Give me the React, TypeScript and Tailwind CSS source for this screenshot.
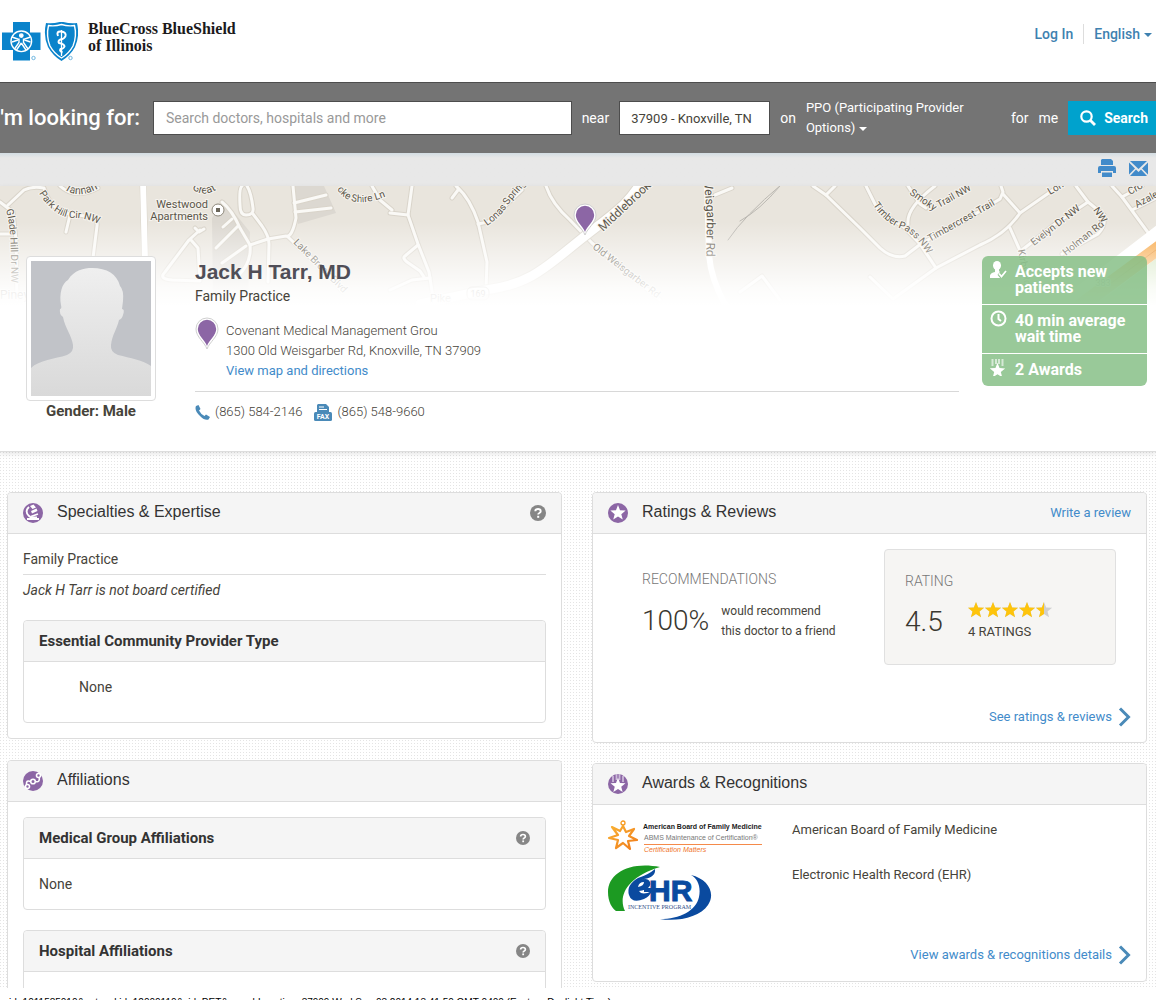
import React from 'react';

const roads: string[] = [
  'M0 202L13 212L16 240L17 300', 'M8 205L24 190Q32 186 44 188Q50 210 70 214L92 217Q98 220 97 226L93 258',
  'M70 215L66 232', 'M0 234H10', 'M60 186Q75 200 98 188',
  'M242 186Q239 188 240 205Q240 215 246 215Q254 215 253 208Q251 192 247 186',
  'M222 202Q232 210 240 228L250 245Q252 262 238 276', 'M250 245L268 239L286 236Q292 238 296 218L293 186',
  'M294 203L326 195', 'M295 212L331 208', 'M253 214L262 226Q269 236 269 244L268 282',
  'M288 237L306 254Q330 272 342 292', 'M195 228L199 232L204 229', 'M200 230L189 240L165 272Q158 279 172 280L200 281L198 248L191 240',
  'M223 227L232 219', 'M216 248L238 226', 'M222 263L246 246', 'M372 186L380 200L392 210',
  'M390 213L408 215', 'M412 186L408 215L418 244L429 272L434 304', 'M418 245L405 256Q402 258 407 262L420 271L424 277',
  'M430 278L412 280L390 290', 'M456 186Q470 198 478 222L487 262L486 290', 'M452 198L458 190', 'M478 224L488 222L522 190',
  'M546 186Q552 204 570 220L592 243L660 300', 'M715 195L732 188', 'M740 292L762 276L780 300',
  'M813 186L826 195L860 228L880 248Q892 259 905 256L922 243L962 222L1000 199L1003 192L1001 186',
  'M826 195L835 186', 'M866 186L878 210L905 228L920 244L936 268', 'M870 277L893 299L936 268L980 245Q1006 234 1020 213L1056 188',
  'M1003 194L1020 213', 'M908 186L920 204L926 208', 'M935 186Q906 208 908 224', 'M1010 228L1022 255L1030 290',
  'M1022 250L1055 224L1088 202L1076 186', 'M1088 202L1104 215Q1106 226 1098 234L1062 254', 'M1112 186L1122 197L1152 238',
  'M1122 197L1142 186', 'M1132 210L1156 198',
];

const labels: { id: string; d: string; text: string; size: number }[] = [
  { id: 'tannah', d: 'M64 189Q80 201 104 185', text: 'Tannah', size: 11 },
  { id: 'park', d: 'M39 193Q54 218 74 218Q90 218 106 228', text: 'Park Hill Cir NW', size: 10 },
  { id: 'glade', d: 'M6 210Q12 226 11 290', text: 'Glade Hill Dr NW', size: 10 },
  { id: 'great', d: 'M192 188Q203 200 222 186', text: 'Great', size: 11 },
  { id: 'joke', d: 'M337 189Q352 214 396 192', text: 'oke Shire Ln', size: 10 },
  { id: 'lake', d: 'M293 243L356 306', text: 'Lake Brook Blvd', size: 10 },
  { id: 'lonas', d: 'M487 226Q502 216 510 202L534 174', text: 'Lonas Springs', size: 10 },
  { id: 'middle', d: 'M603 232L656 182', text: 'Middlebrook', size: 12 },
  { id: 'old', d: 'M592 248L664 304', text: 'Old Weisgarber Rd', size: 10 },
  { id: 'weis', d: 'M704 179L707 220L706 270', text: 'Weisgarber Rd', size: 12 },
  { id: 'timber', d: 'M873 205Q885 223 902 229Q918 236 932 262', text: 'Timber Pass NW', size: 10 },
  { id: 'smoky', d: 'M909 194L938 214', text: 'Smoky', size: 10 },
  { id: 'trail', d: 'M939 208L982 184', text: 'Trail NW', size: 10 },
  { id: 'crest', d: 'M930 242L1004 200', text: 'Timbercrest Trail', size: 10 },
  { id: 'evelyn', d: 'M1034 246L1088 204', text: 'Evelyn Dr NW', size: 10 },
  { id: 'holman', d: 'M1066 256L1110 221', text: 'Holman Rd', size: 10 },
  { id: 'nw', d: 'M1093 210L1106 229', text: 'NW', size: 10 },
  { id: 'kirby', d: 'M1018 250L1027 300', text: 'Kirby Rd', size: 10 },
  { id: 'lon', d: 'M1050 195L1072 182', text: 'Lon', size: 10 },
  { id: 'cross', d: 'M1130 195L1154 182', text: 'Cro', size: 10 },
  { id: 'azalea', d: 'M1137 208L1170 190', text: 'Azalea', size: 10 },
];

function Pin({ className }: { className?: string }) {
  return (
    <svg className={className} width="24" height="34" viewBox="0 0 24 34" aria-hidden="true">
      <path d="M12 32C9.500 25 1 20 1 12A11 11 0 0 1 23 12C23 20 14.500 25 12 32Z" fill="#fff" stroke="#cfcfcf" strokeWidth="1" />
      <path d="M12 29C10 23 2.800 18.500 2.800 12A9.200 9.200 0 0 1 21.200 12C21.200 18.500 14 23 12 29Z" fill="#8c66a5" />
    </svg>
  );
}

function MapBackdrop() {
  return (
    <svg
      className="absolute inset-x-0 top-0 h-[120px] w-full"
      viewBox="0 186 1156 120"
      preserveAspectRatio="xMidYMin slice"
      fontFamily="Roboto, 'Noto Sans', sans-serif"
    >
      <defs>
        <linearGradient id="fade" x1="0" y1="0" x2="0" y2="1">
          <stop offset="0.3" stopColor="#fff" stopOpacity="0" />
          <stop offset="0.6" stopColor="#fff" stopOpacity="0.5" />
          <stop offset="0.85" stopColor="#fff" stopOpacity="0.88" />
          <stop offset="1" stopColor="#fff" />
        </linearGradient>
        {labels.map((l) => <path key={l.id} id={l.id} d={l.d} />)}
      </defs>
      <rect y="186" width="1156" height="120" fill="#e9e5dd" />
      <path d="M212 218L224 200L250 232L248 300H213Z M295 186H324L336 213L298 224Z" fill="#dcd8d1" />
      <path d="M1110 270L1156 258V306H1100Z" fill="#cfe3b8" />
      <g fill="none" strokeLinejoin="round" strokeLinecap="round">
        {roads.map((d) => <path key={d} d={d} stroke="#d9d4ca" strokeWidth="5" />)}
        <path d="M143 180L145 262" stroke="#d9d4ca" strokeWidth="7" />
        {roads.map((d) => <path key={d} d={d} stroke="#faf9f6" strokeWidth="3" />)}
        <path d="M143 180L145 262M707 180L709 255Q711 280 726 306" stroke="#fff" strokeWidth="6" />
        <path d="M420 304L486 290C530 284 545 268 580 240S628 206 645 176" stroke="#ddd8ce" strokeWidth="11" />
        <path d="M420 304L486 290C530 284 545 268 580 240S628 206 645 176" stroke="#fff" strokeWidth="9" />
        <path d="M780 186Q760 210 740 221M782 184Q744 216 728 240" stroke="#bbb8b2" strokeWidth="1" />
        <path d="M1164 236L1086 296" stroke="#fff" strokeWidth="26" />
        <path d="M1164 244L1080 306" stroke="#f7a23b" strokeWidth="14" />
        <path d="M1164 244L1080 306" stroke="#e0831c" strokeWidth="1" />
      </g>
      <g fill="#5b564a" stroke="#f6f3ee" strokeWidth="2" paintOrder="stroke">
        {labels.map((l) => (
          <text key={l.id} fontSize={l.size}><textPath href={`#${l.id}`}>{l.text}</textPath></text>
        ))}
        <text x="208" y="208" fontSize="11" textAnchor="end">Westwood</text>
        <text x="208" y="220" fontSize="11" textAnchor="end">Apartments</text>
        <text x="0" y="299" fontSize="12">Piney</text>
        <text x="430" y="302" fontSize="11">Pike</text>
        <text x="478" y="297" fontSize="9" textAnchor="middle">169</text>
        <text x="1103" y="286" fontSize="9" textAnchor="middle">383</text>
      </g>
      <circle cx="218" cy="210" r="6" fill="#fff" stroke="#8d877a" />
      <rect x="216" y="208" width="4" height="4" fill="#6b665a" />
      <rect x="467" y="287" width="22" height="13" rx="5" fill="none" stroke="#b5afa4" />
      <rect y="186" width="1156" height="120" fill="url(#fade)" />
      <g transform="translate(573 203)">
        <path d="M12 32C9.500 25 1 20 1 12A11 11 0 0 1 23 12C23 20 14.500 25 12 32Z" fill="#fff" stroke="#cfcfcf" />
        <path d="M12 29C10 23 2.800 18.500 2.800 12A9.200 9.200 0 0 1 21.200 12C21.200 18.500 14 23 12 29Z" fill="#8c66a5" />
      </g>
    </svg>
  );
}

function Logo() {
  return (
    <svg width="76" height="40" viewBox="0 0 76 40" aria-hidden="true">
      <path d="M11 0H28V10.500H38.500V28H28V38.500H11V28H0V10.500H11Z" fill="#0a83cb" />
      <g fill="none" stroke="#fff" strokeWidth="1.400">
        <circle cx="19.300" cy="19.300" r="10.300" />
        <circle cx="19.300" cy="13.600" r="1.700" fill="#fff" />
        <path d="M10 15L17 17.500M28.500 15L21.500 17.500M17 16.500V20.500L12.500 27M21.500 16.500V20.500L26 27M19.300 21L14.500 28M19.300 21L24 28M10 20L16 18M28.500 20L22.500 18" />
      </g>
      <path d="M44 1Q51 2 59.500 -0.500Q68 2 75 1Q78 14 73 25Q68 34 59.500 39Q51 34 46 25Q41 14 44 1Z" fill="#0a83cb" />
      <path d="M46.500 3.500Q53 4.500 59.500 2.500Q66 4.500 72.500 3.500Q75 14 71 24Q67 31.500 59.500 36Q52 31.500 48 24Q44 14 46.500 3.500Z" fill="none" stroke="#fff" strokeWidth="1.400" />
      <path d="M59.500 8V34" stroke="#fff" strokeWidth="1.300" />
      <path d="M56 14Q54 9 59 9.500Q64.500 10 63.500 14Q62.500 17 58.500 17.500Q55.500 19 57 21Q62.500 22 62.500 24.500Q61.500 27 58.500 27Q57 29 60.500 30.500" fill="none" stroke="#fff" strokeWidth="2" />
      <circle cx="31.500" cy="36" r="1.700" fill="none" stroke="#6fb6e0" />
      <circle cx="68.500" cy="36" r="1.700" fill="none" stroke="#6fb6e0" />
    </svg>
  );
}

function Avatar() {
  return (
    <svg viewBox="0 0 120 135" className="block h-[135px] w-[120px]" role="img" aria-label="Doctor photo">
      <defs>
        <linearGradient id="body" x1="0" y1="0" x2="0" y2="1">
          <stop offset="0" stopColor="#efefef" />
          <stop offset="1" stopColor="#d9d9d9" />
        </linearGradient>
      </defs>
      <rect width="120" height="135" fill="#c1c3c8" />
      <path d="M0 107C8 99 24 98 36 94Q43 91 42 84C41 75 34 67 32 56Q28 53 29 48Q31 48 30 44C28 33 31 22 37 19C43 9 53 7 61 7C76 7 86 13 89 25Q93 29 92 40L91 48Q94 48 92 54Q91 58 88 59C86 68 81 74 80 84Q79 91 87 94C99 97 112 99 120 105V135H0Z" fill="url(#body)" />
    </svg>
  );
}

const STAR = 'M10 1L12.400 7.200L19 7.500L13.900 11.700L15.600 18L10 14.400L4.400 18L6.100 11.700L1 7.500L7.600 7.200Z';

function Round({ children }: { children: React.ReactNode }) {
  return (
    <svg width="20" height="20" viewBox="0 0 20 20" aria-hidden="true" className="shrink-0">
      <circle cx="10" cy="10" r="10" fill="#8c66a5" />
      {children}
    </svg>
  );
}
const SpecialtyIcon = () => (
  <Round>
    <path d="M4 16H16M8 13.500L15 11" stroke="#fff" strokeWidth="1.800" fill="none" />
    <path d="M7 3L10.500 1.500L13 4.500L9.500 6Z M8 8L13.500 5.500L14.500 8L9 10.500Z" fill="#fff" />
    <path d="M6 4Q1.500 8 5.500 12.500L8 14.500H14" stroke="#fff" strokeWidth="1.800" fill="none" />
  </Round>
);
const AffiliationIcon = () => (
  <Round>
    <g fill="none" stroke="#fff" strokeWidth="1.600">
      <circle cx="10" cy="10.500" r="2.300" />
      <circle cx="15.500" cy="4.500" r="2" />
      <circle cx="4.500" cy="15.500" r="2" />
      <path d="M7.700 10.500Q3 8.500 3.500 13.500M12.300 10.500Q17 12 16.300 6.500" />
    </g>
  </Round>
);
const RatingIcon = () => <Round><path d={STAR} fill="#fff" transform="translate(1.500 1.200) scale(.85)" /></Round>;
const AwardIcon = () => (
  <Round>
    <path d="M5 2V8M8.500 0V6M11.500 0V6M15 2V8" stroke="#cbb9d8" strokeWidth="1.800" />
    <path d={STAR} fill="#fff" transform="translate(1.700 3) scale(.83)" />
  </Round>
);

function Help({ size, label }: { size: number; label: string }) {
  return (
    <button type="button" aria-label={label} className="shrink-0">
      <svg width={size} height={size} viewBox="0 0 16 16" aria-hidden="true">
        <circle cx="8" cy="8" r="8" fill="#868686" />
        <path d="M5.300 6.300Q5.300 4 8 4T10.700 6.200Q10.700 7.300 9.400 8Q8.200 8.600 8.200 9.600" fill="none" stroke="#fff" strokeWidth="1.900" />
        <rect x="7.200" y="10.800" width="2" height="2" fill="#fff" />
      </svg>
    </button>
  );
}

function Chevron() {
  return (
    <svg width="13" height="20" viewBox="0 0 13 20" aria-hidden="true">
      <path d="M2 1.500L10.500 10L2 18.500" fill="none" stroke="#4a8ab8" strokeWidth="3" />
    </svg>
  );
}

function Panel({ icon, title, aside, children }: { icon: React.ReactNode; title: string; aside?: React.ReactNode; children: React.ReactNode }) {
  return (
    <section className="rounded border border-[#ddd] bg-white">
      <header className="flex h-[41px] items-center rounded-t border-b border-[#ddd] bg-[#f5f5f5] px-[15px]">
        {icon}
        <h2 className="ml-3.5 flex-1 pb-0.5 font-['Liberation_Sans',sans-serif] text-base leading-5 text-[#333]">{title}</h2>
        {aside}
      </header>
      {children}
    </section>
  );
}

function SubPanel({ title, help, children }: { title: string; help?: boolean; children: React.ReactNode }) {
  return (
    <section className="rounded border border-[#ddd] bg-white">
      <header className="flex h-[41px] items-center rounded-t border-b border-[#ddd] bg-[#f5f5f5] px-[15px]">
        <h3 className="flex-1 text-[15px] font-bold text-[#333]">{title}</h3>
        {help && <Help size={14} label={`About ${title}`} />}
      </header>
      {children}
    </section>
  );
}

function AbfmLogo() {
  return (
    <svg width="154" height="34" viewBox="0 0 154 34" className="shrink-0 overflow-visible" role="img" aria-label="American Board of Family Medicine logo" fontFamily="'Liberation Sans', sans-serif">
      <defs>
        <linearGradient id="sun" x1="0" y1="0" x2="1" y2="1">
          <stop offset="0" stopColor="#f9b233" />
          <stop offset="1" stopColor="#f07a1a" />
        </linearGradient>
      </defs>
      <circle cx="15" cy="3" r="2" fill="none" stroke="#f79a1e" strokeWidth="1.300" />
      <path d="M15 6L18 12L26 9L21 16L29 20L20 21L22 29L15 23L8 28L10 20L1 18L10 15L4 7L12 11Z" fill="none" stroke="url(#sun)" strokeWidth="2.200" strokeLinejoin="round" />
      <text x="35" y="9" fontSize="7" fontWeight="700" fill="#1b1b1b">American Board of Family Medicine</text>
      <text x="36" y="20" fontSize="7" fill="#777">ABMS Maintenance of Certification®</text>
      <path d="M36 24.500H154" stroke="#f58a4a" />
      <text x="36" y="32" fontSize="7" fontStyle="italic" fill="#f0752b">Certification Matters</text>
    </svg>
  );
}

function EhrLogo() {
  return (
    <svg width="104" height="55" viewBox="0 0 104 55" className="shrink-0" role="img" aria-label="EHR Incentive Program logo">
      <path d="M52 2C22 -4 0 8 0 27C0 37 4 43 8 46H17C10 32 18 12 52 2Z" fill="#1c9a22" />
      <path d="M83 10C100 14 108 28 100 40C92 52 70 57 52 54C72 54 88 46 91 32C93 22 90 14 83 10Z" fill="#0a4a9f" />
      <path d="M36 14Q48 12 47 4Q40 10 30 13Q18 20 21 30Q24 39 36 34Q42 31 44 26Q34 31 31 26Q44 24 42 17Q40 12 32 15ZM30 22Q31 17 36 17Q36 21 30 22Z" fill="#0a4a9f" fillRule="evenodd" />
      <path d="M36 23H48V27H36Z" fill="#0a4a9f" />
      <text x="41" y="36" fontSize="30" fontWeight="700" fill="#0a4a9f" stroke="#0a4a9f" fontFamily="'Liberation Sans', sans-serif">HR</text>
      <text x="20" y="44" fontSize="6" fill="#33518a" fontFamily="'Liberation Serif', serif">INCENTIVE PROGRAM</text>
    </svg>
  );
}

function Stars() {
  return (
    <svg width="85" height="17" viewBox="0 0 85 17" role="img" aria-label="4.5 out of 5 stars">
      <defs><clipPath id="half"><rect width="76" height="17" /></clipPath></defs>
      {[0, 17, 34, 51, 68].map((x) => <path key={x} d={STAR} fill="#cfcfcf" transform={`translate(${x - 1} 0) scale(.9)`} />)}
      <g clipPath="url(#half)">
        {[0, 17, 34, 51, 68].map((x) => <path key={x} d={STAR} fill="#fec40b" transform={`translate(${x - 1} 0) scale(.9)`} />)}
      </g>
    </svg>
  );
}

const Caret = () => <span className="ml-1 inline-block border-x-4 border-t-4 border-x-transparent border-t-current align-middle" />;

export default function App() {
  return (
    <div className="flex h-screen flex-col overflow-hidden bg-white font-[Roboto,'Noto_Sans',sans-serif] text-sm leading-5 text-[#46433a]">
      <header className="flex h-[82px] shrink-0 items-start justify-between pt-[22px] pr-1 pl-0.5">
        <a href="#home" className="flex items-start">
          <Logo />
          <span className="-mt-0.5 ml-2.5 font-['Liberation_Serif',serif] text-base leading-[17px] font-bold text-[#1c1a1b]">
            BlueCross BlueShield<br />of Illinois
          </span>
        </a>
        <nav className="flex items-center pt-0.5 font-medium text-[#3e81b0]">
          <a href="#login" className="pr-2.5">Log In</a>
          <button type="button" className="border-l border-[#ddd] pl-2.5 font-medium">English<Caret /></button>
        </nav>
      </header>

      <form className="flex h-[71px] shrink-0 items-center border-t border-[#4d4d4d] bg-[#747474] text-white">
        <label htmlFor="query" className="-ml-1.5 shrink-0 text-[22px] font-medium whitespace-nowrap">I'm looking for:</label>
        <input id="query" placeholder="Search doctors, hospitals and more" className="ml-[13px] h-[34px] min-w-0 flex-1 border border-[#4d4d4d] bg-white px-3 text-[#444] placeholder:text-[#999]" />
        <label htmlFor="near" className="mx-2.5">near</label>
        <input id="near" defaultValue="37909 - Knoxville, TN" className="h-[34px] w-[151px] border border-[#4d4d4d] bg-white px-[11px] text-[13px] text-[#46433a]" />
        <span className="mx-2.5">on</span>
        <button type="button" className="w-[195px] text-left text-[13px]">PPO (Participating Provider<br />Options)<Caret /></button>
        <span className="ml-2.5">for</span>
        <span className="mx-2.5">me</span>
        <button type="submit" className="flex h-[34px] items-center gap-2 bg-[#00a2cd] px-3 font-bold">
          <svg width="16" height="16" viewBox="0 0 16 16" fill="none" stroke="#fff" aria-hidden="true">
            <circle cx="6.500" cy="6.500" r="5.200" strokeWidth="2.200" /><path d="M10.500 10.500L15 15" strokeWidth="2.800" />
          </svg>
          <span className="-mr-1">Search</span>
        </button>
      </form>

      <div className="flex h-[33px] shrink-0 items-center justify-end gap-3 bg-linear-to-b from-[#d3dde3] via-[#e8e8e8] via-15% to-[#e8e8e8] pr-2 pb-[3px] text-[#428bca]">
        <button type="button" aria-label="Print">
          <svg width="20" height="18" viewBox="0 0 20 18" fill="currentColor" aria-hidden="true">
            <path d="M5 0H14L16 2V6H4V1Z M3 7H17Q19 7 19 9V14H16V12H4V14H1V9Q1 7 3 7Z M5 13.500H15V18H5Z" />
          </svg>
        </button>
        <button type="button" aria-label="Email">
          <svg width="19" height="15" viewBox="0 0 19 15" fill="currentColor" aria-hidden="true">
            <path d="M1 0H18L9.500 8Z M0 1.500L6 7.500L0 13.500Z M19 1.500L13 7.500L19 13.500Z M7 8.500L9.500 11L12 8.500L18 15H1Z" />
          </svg>
        </button>
      </div>

      <section className="relative z-10 h-[266px] shrink-0 border-b border-[#ddd] shadow-[0_2px_5px_rgba(0,0,0,0.1)]">
        <MapBackdrop />
        <div className="relative flex items-start pt-[70px] pr-[9px] pl-[26px]">
          <div className="w-[130px] shrink-0 text-center">
            <div className="rounded border border-[#ddd] bg-white p-1"><Avatar /></div>
            <p className="text-[15px] font-bold">Gender: Male</p>
          </div>
          <div className="ml-[39px] min-w-0 flex-1">
            <h1 className="pt-1 font-['Liberation_Sans',sans-serif] text-[21px] leading-6 font-bold text-[#504e57]">Jack H Tarr, MD</h1>
            <p className="pt-0.5">Family Practice</p>
            <div className="mt-[15px] flex border-b border-[#d8d8d8] pb-2.5">
              <Pin className="-mt-1 mr-[7px] shrink-0" />
              <address className="text-[13px] font-light not-italic">
                Covenant Medical Management Grou<br />1300 Old Weisgarber Rd, Knoxville, TN 37909<br />
                <a href="#map" className="font-normal text-[#428bca]">View map and directions</a>
              </address>
            </div>
            <div className="mt-2.5 flex items-center text-[13px] font-light">
              <svg width="15" height="15" viewBox="0 0 15 15" className="mr-[5px]" aria-hidden="true">
                <path d="M1 1L3.500 0L5.500 4L4 5.500Q6 9.500 9.500 11L11 9.500L15 12L13.500 14.500Q10 16 5 11Q-1 5 1 1Z" fill="#4a8ab8" />
              </svg>
              (865) 584-2146
              <svg width="18" height="17" viewBox="0 0 18 17" className="mr-[5px] ml-3" aria-hidden="true">
                <path d="M4 0H12L15 3V8H3V1Z" fill="#4a8ab8" /><path d="M5 3H10M5 5.500H13" stroke="#fff" />
                <rect y="8" width="18" height="9" rx="1.500" fill="#4a8ab8" />
                <text x="9" y="15" fontSize="7" fontWeight="700" textAnchor="middle" fill="#fff">FAX</text>
              </svg>
              (865) 548-9660
            </div>
          </div>
          <ul className="ml-[23px] w-[165px] shrink-0 divide-y divide-white overflow-hidden rounded-md bg-[#7fbc7f]/80 text-base leading-4 font-bold text-white">
            <li className="flex h-[49px] gap-2 px-2 pt-2">
              <svg width="17" height="17" viewBox="0 0 17 17" fill="#fff" className="-mt-[3px] shrink-0" aria-hidden="true">
                <ellipse cx="7" cy="4.500" rx="4" ry="4.500" /><path d="M5 8H9V10L10 11L8.500 12.500L11 17H0Q-1 12 5 11Z" />
                <path d="M9 12.500L11.500 15.500L16 10" fill="none" stroke="#93c593" strokeWidth="4" />
                <path d="M9 12.500L11.500 15.500L16 10" fill="none" stroke="#fff" strokeWidth="1.800" />
              </svg>
              Accepts new<br />patients
            </li>
            <li className="flex h-[49px] gap-2 px-2 pt-2">
              <svg width="17" height="17" viewBox="0 0 17 17" fill="none" stroke="#fff" strokeWidth="2" className="-mt-[3px] shrink-0" aria-hidden="true">
                <circle cx="8.500" cy="8.500" r="7" /><path d="M8.500 4V9L11 11" />
              </svg>
              40 min average<br />wait time
            </li>
            <li className="flex h-8 gap-2 px-2 pt-2">
              <svg width="17" height="17" viewBox="0 0 17 17" className="-mt-[3px] shrink-0" aria-hidden="true">
                <path d="M2.500 0V7M6 0V5M9 0V5M12.500 0V7" stroke="#fff" strokeOpacity=".6" strokeWidth="2" />
                <path d={STAR} fill="#fff" transform="translate(-1 3) scale(.85)" />
              </svg>
              2 Awards
            </li>
          </ul>
        </div>
      </section>

      <main className="grid min-h-0 flex-1 grid-cols-2 items-start gap-x-[30px] overflow-hidden bg-[conic-gradient(at_1px_1px,#fff_75%,#e4e4e4_0)] bg-[length:3px_3px] pt-10 pr-[9px] pl-[7px]">
        <div className="flex flex-col gap-[21px]">
          <Panel icon={<SpecialtyIcon />} title="Specialties & Expertise" aside={<Help size={16} label="About specialties" />}>
            <div className="p-[15px]">
              <p className="border-b border-[#ddd] pb-[5px]">Family Practice</p>
              <p className="mt-[5px] mb-5 italic">Jack H Tarr is not board certified</p>
              <SubPanel title="Essential Community Provider Type">
                <p className="px-[55px] pt-[15px] pb-[25px]">None</p>
              </SubPanel>
            </div>
          </Panel>
          <Panel icon={<AffiliationIcon />} title="Affiliations">
            <div className="flex flex-col gap-5 p-[15px]">
              <SubPanel title="Medical Group Affiliations" help><p className="p-[15px]">None</p></SubPanel>
              <SubPanel title="Hospital Affiliations" help><p className="p-[15px]">None</p></SubPanel>
            </div>
          </Panel>
        </div>

        <div className="flex flex-col gap-5">
          <Panel icon={<RatingIcon />} title="Ratings & Reviews" aside={<a href="#write" className="text-[13px] text-[#428bca]">Write a review</a>}>
            <div className="flex items-start justify-between pt-[15px] pr-[30px] pl-[49px]">
              <div className="pt-5">
                <h4 className="leading-5 font-light text-[#777]">RECOMMENDATIONS</h4>
                <div className="mt-3 flex items-center gap-3">
                  <span className="text-[28px] leading-10 font-light text-[#3a372f]">100%</span>
                  <p className="text-xs leading-5">would recommend<br />this doctor to a friend</p>
                </div>
              </div>
              <div className="h-[116px] w-[232px] rounded border border-[#e0e0e0] bg-[#f6f5f3] px-5 pt-[21px]">
                <h4 className="leading-5 font-light text-[#777]">RATING</h4>
                <div className="mt-2.5 flex items-center">
                  <span className="w-[63px] text-[28px] leading-10 font-light text-[#3a372f]">4.5</span>
                  <div className="flex flex-col gap-1"><Stars /><p className="text-[13px]">4 RATINGS</p></div>
                </div>
              </div>
            </div>
            <a href="#ratings" className="mt-[42px] mb-[15px] flex items-center justify-end gap-1.5 pr-[15px] text-[13px] text-[#428bca]">See ratings &amp; reviews<Chevron /></a>
          </Panel>
          <Panel icon={<AwardIcon />} title="Awards & Recognitions">
            <ul className="flex flex-col gap-[11px] px-[15px] pt-[15px] text-[13px]">
              <li className="flex items-start gap-[30px]"><AbfmLogo /><span>American Board of Family Medicine</span></li>
              <li className="flex items-start gap-[80px]"><EhrLogo /><span>Electronic Health Record (EHR)</span></li>
            </ul>
            <a href="#awards" className="mt-[25px] mb-4 flex items-center justify-end gap-1.5 pr-[15px] text-[13px] text-[#428bca]">View awards &amp; recognitions details<Chevron /></a>
          </Panel>
        </div>
      </main>
      <footer className="h-3 shrink-0 overflow-hidden bg-white pt-[9px] pl-1 font-['Liberation_Sans',sans-serif] text-[10px] leading-3 whitespace-nowrap text-black">
        <p>sid=1011585010&amp;networkid=12000110&amp;sid=PET&amp;searchLocation=37909 Wed Sep 03 2014 13:41:50 GMT-0400 (Eastern Daylight Time)</p>
      </footer>
    </div>
  );
}
